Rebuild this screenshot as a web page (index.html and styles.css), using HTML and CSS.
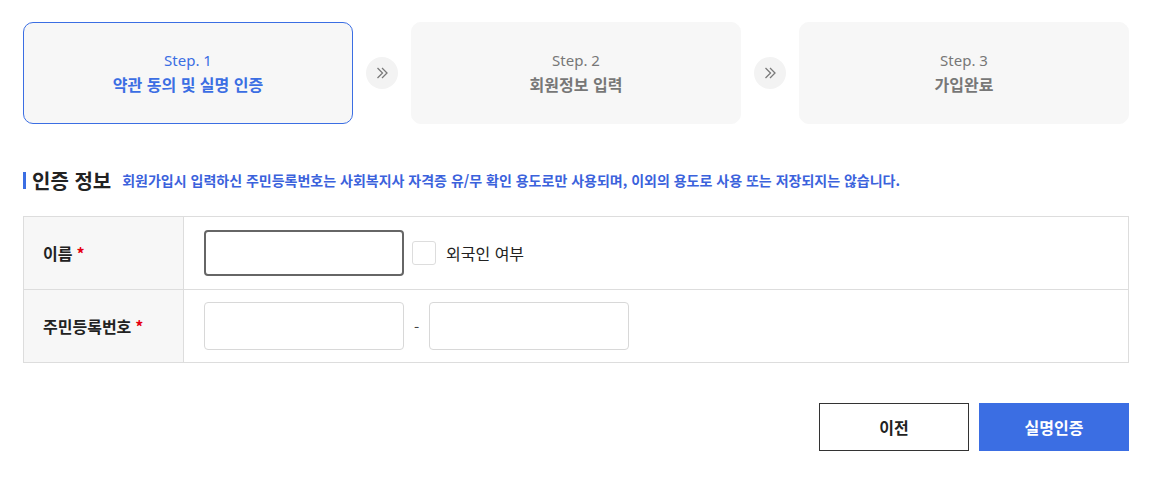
FILE: index.html
```html
<!DOCTYPE html>
<html lang="ko">
<head>
  <meta charset="UTF-8" />
  <title>실명 인증</title>
  <link rel="stylesheet" href="styles.css">
</head>
<body>
  <div class="wrap">
    <div class="steps">
      <div class="step active">
        <span class="step-num">Step. 1</span>
        <strong class="step-name">약관 동의 및 실명 인증</strong>
      </div>
      <div class="step-arrow">
        <svg width="16" height="16" viewBox="0 0 16 16"><path d="M3.5 3l5 5-5 5M8 3l5 5-5 5" fill="none" stroke="#7a7a7a" stroke-width="1.3"/></svg>
      </div>
      <div class="step">
        <span class="step-num">Step. 2</span>
        <strong class="step-name">회원정보 입력</strong>
      </div>
      <div class="step-arrow">
        <svg width="16" height="16" viewBox="0 0 16 16"><path d="M3.5 3l5 5-5 5M8 3l5 5-5 5" fill="none" stroke="#7a7a7a" stroke-width="1.3"/></svg>
      </div>
      <div class="step">
        <span class="step-num">Step. 3</span>
        <strong class="step-name">가입완료</strong>
      </div>
    </div>

    <div class="section-head">
      <h2 class="section-title">인증 정보</h2>
      <p class="section-desc">회원가입시 입력하신 주민등록번호는 사회복지사 자격증 유/무 확인 용도로만 사용되며, 이외의 용도로 사용 또는 저장되지는 않습니다.</p>
    </div>

    <div class="form-table">
      <div class="row">
        <div class="label">이름 <span class="req">*</span></div>
        <div class="field">
          <input type="text" class="input focused">
          <label class="check"><span class="box"></span>외국인 여부</label>
        </div>
      </div>
      <div class="row">
        <div class="label">주민등록번호 <span class="req">*</span></div>
        <div class="field">
          <input type="text" class="input">
          <span class="dash">-</span>
          <input type="text" class="input">
        </div>
      </div>
    </div>

    <div class="actions">
      <button class="btn btn-prev">이전</button>
      <button class="btn btn-ok">실명인증</button>
    </div>
  </div>
</body>
</html>
```

FILE: styles.css
```css
body {
  margin: 0;
  background: #fff;
  font-family: "Noto Sans CJK KR", "Noto Sans", sans-serif;
  color: #222;
}

.wrap {
  width: 1106px;
  padding: 22px 0 0 23px;
}

.steps {
  display: flex;
  align-items: center;
}

.step {
  width: 330px;
  height: 102px;
  box-sizing: border-box;
  background: #f7f7f7;
  border-radius: 10px;
  border: 1px solid #f7f7f7;
  display: flex;
  flex-direction: column;
  align-items: center;
  justify-content: center;
  color: #777;
  font-size: 16px;
  line-height: 24px;
  padding-bottom: 3px;
}

.step.active {
  border-color: #3b6ee3;
  color: #3b6ee3;
}

.step-num {
  font-family: "Noto Sans", sans-serif;
  font-size: 15px;
}

.step-name {
  font-weight: 700;
}

.step-arrow {
  width: 32px;
  height: 32px;
  margin: 0 13px;
  border-radius: 50%;
  background: #f3f3f3;
  display: flex;
  align-items: center;
  justify-content: center;
}

.section-head {
  display: flex;
  align-items: center;
  margin-top: 46px;
}

.section-title {
  margin: 0;
  padding-left: 6px;
  border-left: 3px solid #3b6ee3;
  font-size: 20px;
  line-height: 17px;
  font-weight: 700;
  color: #222;
}

.section-desc {
  margin: 0 0 0 11px;
  font-size: 14px;
  font-weight: 700;
  color: #3b62dc;
}

.form-table {
  margin-top: 26px;
  border-top: 1px solid #ddd;
}

.row {
  display: flex;
  height: 72px;
  border-bottom: 1px solid #ddd;
  border-left: 1px solid #ddd;
  border-right: 1px solid #ddd;
}

.label {
  width: 160px;
  box-sizing: border-box;
  padding-left: 19px;
  background: #f7f7f7;
  border-right: 1px solid #ddd;
  display: flex;
  align-items: center;
  font-size: 16px;
  font-weight: 700;
}

.req {
  color: #e60012;
  margin-left: 4px;
}

.field {
  display: flex;
  align-items: center;
  padding-left: 20px;
}

.input {
  width: 200px;
  height: 48px;
  box-sizing: border-box;
  border: 1px solid #d8d8d8;
  border-radius: 4px;
  background: #fff;
}

.input.focused {
  height: 46px;
  border: 2px solid #666;
}

.check {
  display: flex;
  align-items: center;
  margin-left: 8px;
  font-size: 16px;
  color: #222;
}

.box {
  width: 24px;
  height: 24px;
  box-sizing: border-box;
  border: 1px solid #ddd;
  border-radius: 3px;
  margin-right: 10px;
}

.dash {
  margin: 0 10px;
  font-size: 15px;
  color: #444;
}

.actions {
  display: flex;
  justify-content: flex-end;
  gap: 10px;
  margin-top: 40px;
}

.btn {
  width: 150px;
  height: 48px;
  box-sizing: border-box;
  font-family: inherit;
  font-size: 16px;
  font-weight: 700;
  cursor: pointer;
}

.btn-prev {
  background: #fff;
  border: 1px solid #333;
  color: #222;
}

.btn-ok {
  background: #3b6ee3;
  border: none;
  color: #fff;
}
```
